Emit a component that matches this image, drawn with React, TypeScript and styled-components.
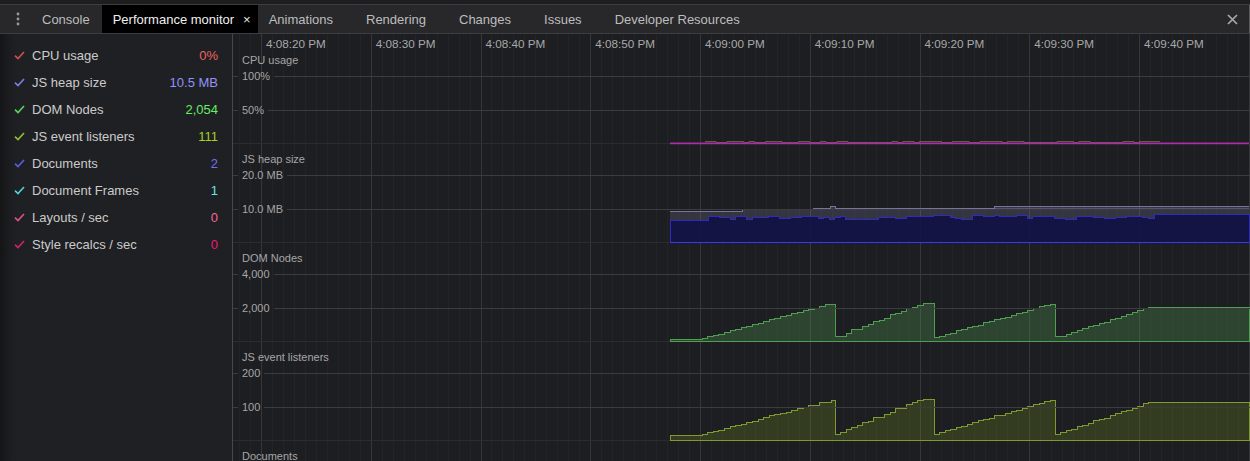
import React from 'react'
import styled, { createGlobalStyle } from 'styled-components'

const GlobalStyle = createGlobalStyle`
  html, body {
    margin: 0;
    padding: 0;
    background: #1d1e21;
    overflow: hidden;
  }
  body {
    font-family: 'Liberation Sans', Arial, sans-serif;
  }
`

// chart geometry, in page pixels
const CHART_LEFT = 233
const BASE_Y = 91.5
const MAJOR_STEP = 109.75
const FIRST_MAJOR = 28.5

type Point = [number, number]
type Seg = { x0: number; x1: number; y0: number; y1: number }

const seeded = (seed: number) => {
  let s = seed
  return () => {
    s = (s * 9301 + 49297) % 233280
    return s / 233280
  }
}

const toX = (pageX: number) => pageX - CHART_LEFT

const flat = (x0: number, x1: number, y: number): Seg => ({ x0, x1, y0: y, y1: y })
const ramp = (x0: number, x1: number, y0: number, y1: number): Seg => ({ x0, x1, y0, y1 })

function jitter(x0: number, x1: number, lo: number, hi: number, seed: number): Seg[] {
  const rnd = seeded(seed)
  const segs: Seg[] = []
  let x = x0
  while (x < x1) {
    const nx = Math.min(x1, x + (rnd() < 0.5 ? 5.5 : 11))
    segs.push(flat(x, nx, Math.round(lo + rnd() * (hi - lo))))
    x = nx
  }
  return segs
}

function stairs(segs: Seg[], seed: number, step = 5.5): Point[] {
  const rnd = seeded(seed)
  const pts: Point[] = []
  segs.forEach((s) => {
    const x0 = toX(s.x0)
    const x1 = toX(s.x1)
    if (s.y0 === s.y1) {
      const y = Math.round(s.y0) + 0.5
      pts.push([x0, y], [x1, y])
      return
    }
    const n = Math.max(2, Math.round((x1 - x0) / step))
    let prev = s.y0
    for (let i = 0; i < n; i++) {
      const t = Math.min(1, Math.max(0, (i + (rnd() - 0.5) * 0.9) / (n - 1)))
      let y = Math.round(s.y0 + (s.y1 - s.y0) * t)
      y = Math.min(y, prev)
      prev = y
      const xa = x0 + ((x1 - x0) * i) / n
      const xb = x0 + ((x1 - x0) * (i + 1)) / n
      pts.push([xa, y + 0.5], [xb, y + 0.5])
    }
  })
  return pts
}

const linePath = (pts: Point[]) => 'M' + pts.map(([x, y]) => `${x.toFixed(1)} ${y}`).join(' L')
const areaPath = (pts: Point[]) =>
  `M${pts[0][0]} ${BASE_Y} L` +
  pts.map(([x, y]) => `${x.toFixed(1)} ${y}`).join(' L') +
  ` L${pts[pts.length - 1][0]} ${BASE_Y} Z`

const domPoints = stairs(
  [
    flat(670, 702, 89),
    ramp(702, 831, 88, 54),
    flat(831, 835, 54),
    ramp(835, 923, 87, 54),
    flat(923, 934, 53),
    ramp(934, 1050, 87, 55),
    flat(1050, 1055, 54),
    ramp(1055, 1154, 87, 57),
    flat(1154, 1249, 57),
  ],
  7,
)

const listenerPoints = stairs(
  [
    flat(670, 702, 86),
    ramp(702, 831, 85, 52),
    flat(831, 835, 51),
    ramp(835, 923, 85, 51),
    flat(923, 934, 50),
    ramp(934, 1050, 85, 52),
    flat(1050, 1055, 51),
    ramp(1055, 1154, 85, 53),
    flat(1154, 1249, 53),
  ],
  11,
)

const heapTotal = stairs(
  [flat(670, 742, 60), flat(742, 813, 58), flat(813, 830, 57), flat(830, 835, 55), flat(835, 994, 57), flat(994, 1249, 55)],
  3,
)
const heapTotalShadow = stairs([flat(994, 1249, 57)], 3)
const heapUsed = stairs([flat(670, 708, 69), ...jitter(708, 1154, 64, 68, 21), flat(1154, 1249, 63)], 5)
const cpuNoise = stairs(jitter(705, 1160, 89, 90, 33), 9)

const metrics = [
  { label: 'CPU usage', value: '0%', check: '#d24f4f', color: '#ec6461' },
  { label: 'JS heap size', value: '10.5 MB', check: '#7f7fe0', color: '#9292fa' },
  { label: 'DOM Nodes', value: '2,054', check: '#5ed35e', color: '#66ee66' },
  { label: 'JS event listeners', value: '111', check: '#94c02a', color: '#a6d126' },
  { label: 'Documents', value: '2', check: '#5c5ce6', color: '#7070f4' },
  { label: 'Document Frames', value: '1', check: '#4fd4d4', color: '#66e4e4' },
  { label: 'Layouts / sec', value: '0', check: '#e04f8e', color: '#f8649e' },
  { label: 'Style recalcs / sec', value: '0', check: '#d42070', color: '#ec1a72' },
]

const times = ['4:08:20 PM', '4:08:30 PM', '4:08:40 PM', '4:08:50 PM', '4:09:00 PM', '4:09:10 PM', '4:09:20 PM', '4:09:30 PM', '4:09:40 PM']

const tabs = ['Animations', 'Rendering', 'Changes', 'Issues', 'Developer Resources']

const Root = styled.div`
  display: flex;
  flex-direction: column;
  width: 1250px;
  height: 461px;
  overflow: hidden;
`

const TopStrip = styled.div`
  height: 4px;
  background: #1e1e20;
  border-bottom: 1px solid #3c3c3e;
  flex-shrink: 0;
`

const TabBar = styled.div`
  display: flex;
  align-items: stretch;
  height: 28px;
  flex-shrink: 0;
  background: #28282b;
  border-bottom: 1px solid #3d3d40;
  border-right: 1px solid #5b5b5e;
`

const MenuButton = styled.div`
  width: 31px;
  padding-left: 5px;
  box-sizing: border-box;
  display: flex;
  align-items: center;
  justify-content: center;
`

const Tab = styled.div<{ $active?: boolean; $closable?: boolean }>`
  display: flex;
  align-items: center;
  padding: 0 ${(p) => (p.$active ? 7 : p.$closable ? 22 : 12)}px 0 11px;
  background: ${(p) => (p.$active ? '#000' : 'transparent')};
  color: ${(p) => (p.$active ? '#f0f0f0' : '#bdbdbd')};
  font-size: 13px;
  white-space: nowrap;
`

const TabClose = styled.span`
  margin-left: 9px;
  color: #e6e6e6;
  font-size: 13px;
`

const Spacer = styled.div`
  flex: 1;
`

const CloseButton = styled.div`
  display: flex;
  align-items: center;
  margin-right: 11px;
`

const Body = styled.div`
  display: flex;
  flex: 1;
  min-height: 0;
`

const Sidebar = styled.div`
  width: 232px;
  flex-shrink: 0;
  padding-top: 8px;
  background: linear-gradient(to right, #151517 0, #1c1d20 10px, #1f2023 18px);
  border-right: 1px solid #48484b;
`

const MetricRow = styled.div`
  display: flex;
  align-items: center;
  height: 27px;
  padding: 0 14px;
  font-size: 13px;
`

const CheckMark = styled.svg`
  flex-shrink: 0;
  margin-right: 7px;
`

const MetricLabel = styled.span`
  flex: 1;
  color: #cbcbcb;
  white-space: nowrap;
`

const MetricValue = styled.span<{ $color: string }>`
  color: ${(p) => p.$color};
`

const ChartArea = styled.div`
  flex: 1;
  position: relative;
  background: #1d1e21;
  border-right: 1px solid #bfbfc2;
`

const GridLayer = styled.svg`
  position: absolute;
  top: 0;
  left: 0;
  width: 100%;
  height: 100%;
`

const TimeAxis = styled.div`
  position: relative;
  display: flex;
  height: 18px;
  padding-left: 33px;
`

const TimeLabel = styled.div`
  flex: 0 0 ${MAJOR_STEP}px;
  font-size: 11.7px;
  line-height: 19px;
  color: #a9a9a9;
  white-space: nowrap;
`

const Panel = styled.div`
  position: relative;
  height: 99px;
`

const PanelSvg = styled.svg`
  display: block;
  width: 100%;
  height: 99px;
`

const PanelTitle = styled.div`
  position: absolute;
  left: 9px;
  top: 0;
  line-height: 16px;
  font-size: 11px;
  color: #a6a6a6;
  white-space: nowrap;
`

const ScaleRow = styled.div<{ $top: number }>`
  position: absolute;
  left: 0;
  right: 0;
  top: ${(p) => p.$top}px;
  height: 15px;
  display: flex;
  align-items: center;
`

const Tick = styled.div`
  width: 5px;
  height: 1px;
  background: #3b3c40;
`

const ScaleLabel = styled.span`
  margin: 0 4px;
  font-size: 11px;
  line-height: 15px;
  color: #a6a6a6;
  white-space: nowrap;
`

const GridLine = styled.div`
  flex: 1;
  height: 1px;
  background: #3b3c40;
`

const Check = ({ color }: { color: string }) => (
  <CheckMark width="11" height="9" viewBox="0 0 11 9">
    <path d="M1 4.6 L4 7.6 L10 1" fill="none" stroke={color} strokeWidth="1.6" />
  </CheckMark>
)

interface PanelProps {
  title: string
  scale?: [string, string]
  children?: React.ReactNode
}

const ChartPanel: React.FC<PanelProps> = ({ title, scale, children }) => (
  <Panel>
    <PanelSvg>
      <line x1="0" x2="1017" y1={BASE_Y} y2={BASE_Y} stroke="#2b2c30" strokeWidth="1" />
      {children}
    </PanelSvg>
    <PanelTitle>{title}</PanelTitle>
    {scale && (
      <>
        <ScaleRow $top={17}>
          <Tick />
          <ScaleLabel>{scale[0]}</ScaleLabel>
          <GridLine />
        </ScaleRow>
        <ScaleRow $top={51}>
          <Tick />
          <ScaleLabel>{scale[1]}</ScaleLabel>
          <GridLine />
        </ScaleRow>
      </>
    )}
  </Panel>
)

const VerticalGrid = () => {
  const lines: React.ReactNode[] = []
  for (let j = -2; j < 95; j++) {
    const x = Math.round(FIRST_MAJOR - 0.5 + (MAJOR_STEP / 10) * j) + 0.5
    const major = j % 10 === 0
    lines.push(
      <line key={j} x1={x} x2={x} y1="0" y2="430" stroke={major ? '#36373b' : '#232427'} strokeWidth="1" />,
    )
  }
  return <GridLayer>{lines}</GridLayer>
}

const App: React.FC = () => {
  return (
    <Root>
      <GlobalStyle />
      <TopStrip />
      <TabBar>
        <MenuButton>
          <svg width="4" height="14" viewBox="0 0 4 14">
            <circle cx="2" cy="2" r="1.4" fill="#9a9a9a" />
            <circle cx="2" cy="7" r="1.4" fill="#9a9a9a" />
            <circle cx="2" cy="12" r="1.4" fill="#9a9a9a" />
          </svg>
        </MenuButton>
        <Tab>Console</Tab>
        <Tab $active>
          Performance monitor
          <TabClose>×</TabClose>
        </Tab>
        {tabs.map((t) => (
          <Tab key={t} $closable>
            {t}
          </Tab>
        ))}
        <Spacer />
        <CloseButton>
          <svg width="11" height="11" viewBox="0 0 11 11">
            <path d="M1 1 L10 10 M10 1 L1 10" stroke="#a8a8a8" strokeWidth="1.7" />
          </svg>
        </CloseButton>
      </TabBar>
      <Body>
        <Sidebar>
          {metrics.map((m) => (
            <MetricRow key={m.label}>
              <Check color={m.check} />
              <MetricLabel>{m.label}</MetricLabel>
              <MetricValue $color={m.color}>{m.value}</MetricValue>
            </MetricRow>
          ))}
        </Sidebar>
        <ChartArea>
          <VerticalGrid />
          <TimeAxis>
            {times.map((t) => (
              <TimeLabel key={t}>{t}</TimeLabel>
            ))}
          </TimeAxis>
          <ChartPanel title="CPU usage" scale={['100%', '50%']}>
            <path d={linePath(cpuNoise)} fill="none" stroke="rgba(150, 135, 80, 0.6)" strokeWidth="1" />
            <line x1={toX(670)} x2={toX(1249)} y1="91.4" y2="91.4" stroke="#a630a4" strokeWidth="1.6" />
          </ChartPanel>
          <ChartPanel title="JS heap size" scale={['20.0 MB', '10.0 MB']}>
            <path d={areaPath(heapTotal)} fill="rgba(116, 117, 153, 0.27)" stroke="none" />
            <path d={linePath(heapTotal)} fill="none" stroke="#74749e" strokeWidth="1" shapeRendering="crispEdges" />
            <path d={linePath(heapTotalShadow)} fill="none" stroke="rgba(116, 116, 158, 0.5)" strokeWidth="1" shapeRendering="crispEdges" />
            <path d={areaPath(heapUsed)} fill="rgba(12, 12, 70, 0.82)" stroke="#2c2cbe" strokeWidth="1" shapeRendering="crispEdges" />
            <line x1={toX(670)} x2={toX(1249)} y1={BASE_Y} y2={BASE_Y} stroke="#3a3aea" strokeWidth="1" />
          </ChartPanel>
          <ChartPanel title="DOM Nodes" scale={['4,000', '2,000']}>
            <path d={areaPath(domPoints)} fill="rgba(82, 160, 83, 0.3)" stroke="#4f9f51" strokeWidth="1" shapeRendering="crispEdges" />
          </ChartPanel>
          <ChartPanel title="JS event listeners" scale={['200', '100']}>
            <path d={areaPath(listenerPoints)} fill="rgba(110, 135, 32, 0.28)" stroke="#7e9a30" strokeWidth="1" shapeRendering="crispEdges" />
          </ChartPanel>
          <ChartPanel title="Documents" />
        </ChartArea>
      </Body>
    </Root>
  )
}

export default App
